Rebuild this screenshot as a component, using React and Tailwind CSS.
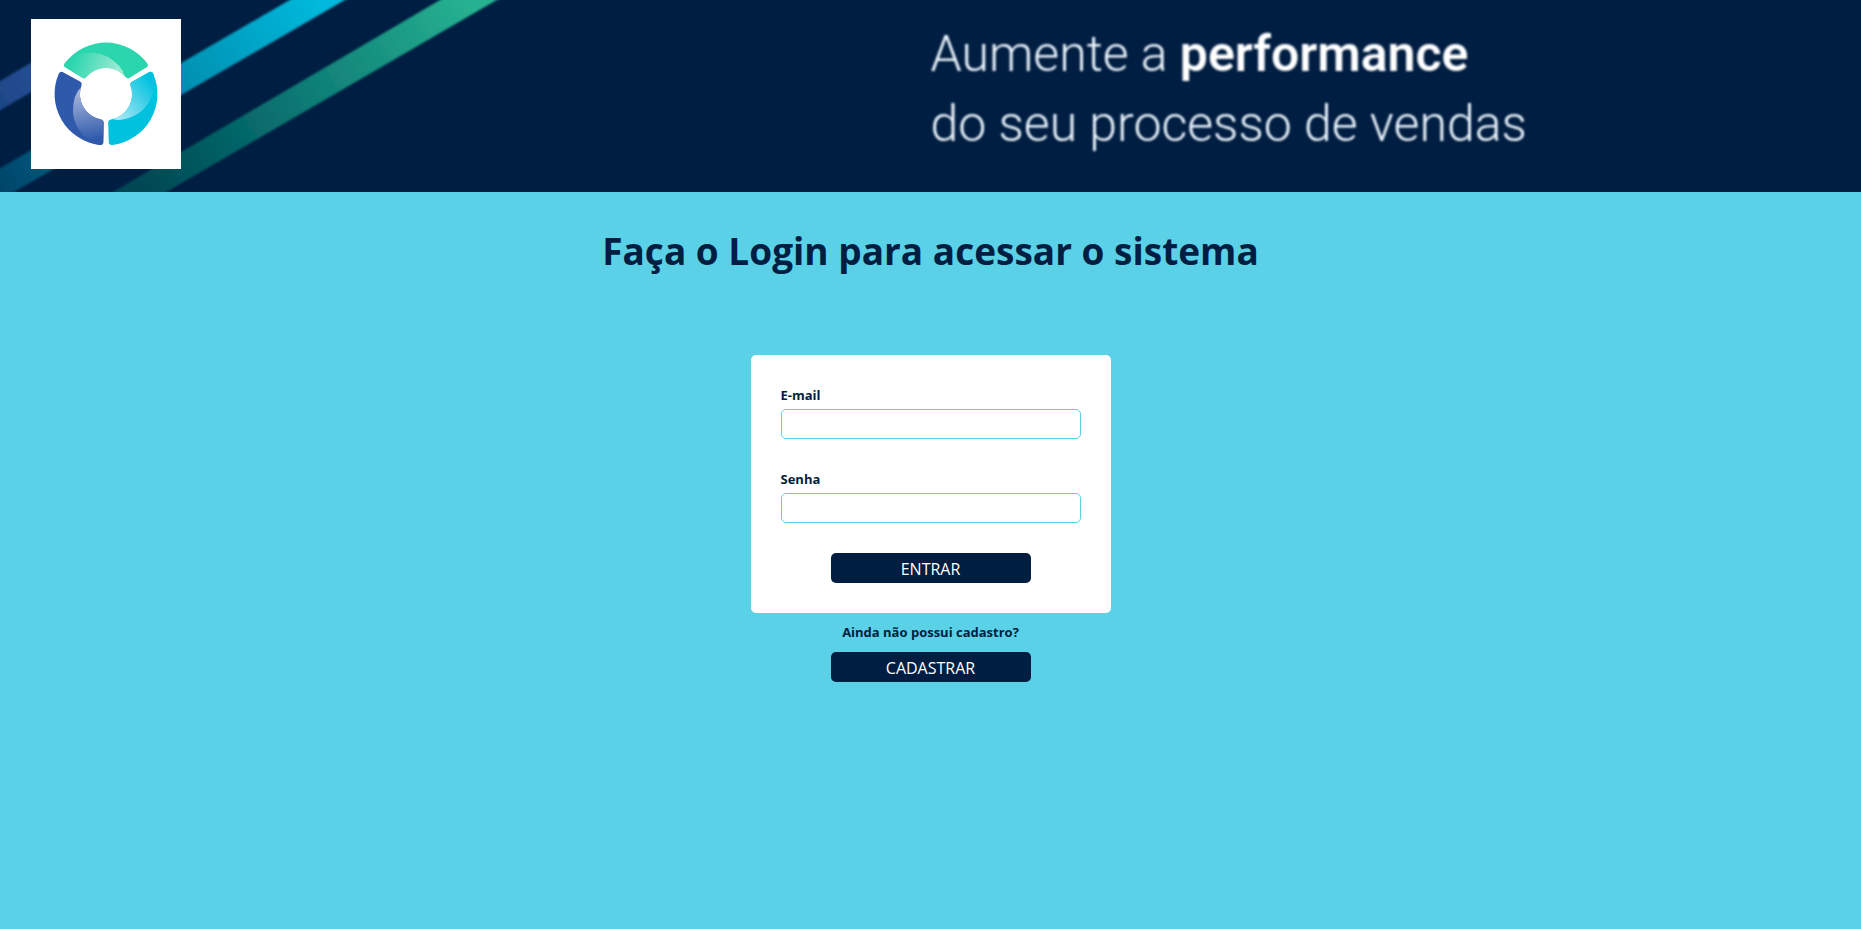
const SEGMENT =
  "M75 99 A154 154 0 0 1 321 99 Q327 108 320 112 L268 144 Q261 147 257 141 A77 77 0 0 0 139 141 Q134 147 127 143 L76 112 Q69 108 75 99 Z";
const SHINE =
  "M75 99 C105 68 160 57 204 81 Q246 106 253 137 A77 77 0 0 0 139 141 Q134 147 127 143 L76 112 Q69 108 75 99 Z";

const PARTS = [
  { id: "green", color: "#2bd6ae", light: "#a0ead5", turn: 0 },
  { id: "cyan", color: "#00c2df", light: "#a4e6f3", turn: 120 },
  { id: "blue", color: "#2f5aab", light: "#a3b2da", turn: 240 },
];

function Logo() {
  return (
    <svg viewBox="-27 -33 450 450" className="size-[150px] bg-white" role="img" aria-label="Logo">
      <defs>
        {PARTS.map((p) => (
          <linearGradient key={p.id} id={p.id} gradientUnits="userSpaceOnUse" x1="85" y1="80" x2="235" y2="135">
            <stop offset="0.1" stopColor={p.color} />
            <stop offset="1" stopColor={p.light} />
          </linearGradient>
        ))}
      </defs>
      {PARTS.map((p) => (
        <g key={p.id} transform={`rotate(${p.turn} 198 192)`}>
          <path d={SEGMENT} fill={p.color} />
          <path d={SHINE} fill={`url(#${p.id})`} />
        </g>
      ))}
    </svg>
  );
}

function Stripes() {
  return (
    <svg viewBox="0 0 520 192" className="absolute left-0 top-0 h-full w-[520px]" aria-hidden="true">
      <defs>
        <linearGradient id="stripeBlue" gradientUnits="userSpaceOnUse" x1="0" y1="96" x2="90" y2="40">
          <stop offset="0" stopColor="#1f4787" />
          <stop offset="1" stopColor="#2f5aab" />
        </linearGradient>
        <linearGradient id="stripeCyan" gradientUnits="userSpaceOnUse" x1="0" y1="185" x2="318" y2="0">
          <stop offset="0" stopColor="#004569" />
          <stop offset="0.6" stopColor="#0493b4" />
          <stop offset="1" stopColor="#00b9dc" />
        </linearGradient>
        <linearGradient id="stripeGreen" gradientUnits="userSpaceOnUse" x1="140" y1="192" x2="468" y2="0">
          <stop offset="0" stopColor="#004653" />
          <stop offset="0.4" stopColor="#08706f" />
          <stop offset="1" stopColor="#27b291" />
        </linearGradient>
        <filter id="soft" filterUnits="userSpaceOnUse" x="-20" y="-20" width="560" height="232">
          <feGaussianBlur stdDeviation="1" />
        </filter>
      </defs>
      <g filter="url(#soft)">
        <path d="M-17 91 L90 28 L90 58 L-17 120 Z" fill="url(#stripeBlue)" />
        <path d="M-17 178 L307 -10 L362 -10 L-17 210 Z" fill="url(#stripeCyan)" />
        <path d="M96 202 L457 -10 L514 -10 L149 202 Z" fill="url(#stripeGreen)" />
      </g>
    </svg>
  );
}

function Field({ id, label, type }) {
  return (
    <div className="flex flex-col gap-1">
      <label htmlFor={id} className="text-[13px] leading-5 font-bold">
        {label}
      </label>
      <input
        id={id}
        type={type}
        className="h-[30px] w-full rounded-[5px] border border-[#5ad1e7] bg-white px-2 text-sm outline-none"
      />
    </div>
  );
}

function Button({ type, children }) {
  return (
    <button
      type={type}
      className="h-[30px] w-[200px] rounded-[5px] bg-[#001e42] pt-0.5 text-base leading-6 text-white"
    >
      {children}
    </button>
  );
}

export default function App() {
  return (
    <div className="min-h-screen bg-[#5ad1e7] font-['Open_Sans','Noto_Sans',sans-serif] text-[#001e42]">
      <header className="relative grid h-48 grid-cols-2 items-start overflow-hidden bg-[#001e42] pt-[19px]">
        <Stripes />
        <div className="relative pl-[31px]">
          <Logo />
        </div>
        <p className="font-[Roboto,sans-serif] text-[50px] leading-[70px] font-light whitespace-nowrap text-[#eef7ff] blur-[1px]">
          Aumente a <strong className="font-semibold text-white">performance</strong>
          <br />
          do seu processo de vendas
        </p>
      </header>
      <main className="flex flex-col items-center pt-8">
        <h1 className="text-center text-[37px] leading-[54px] font-bold">Faça o Login para acessar o sistema</h1>
        <form className="mt-[77px] flex w-[360px] flex-col gap-[30px] rounded-[5px] bg-white p-[30px]">
          <Field id="email" label="E-mail" type="email" />
          <Field id="senha" label="Senha" type="password" />
          <div className="flex justify-center">
            <Button type="submit">ENTRAR</Button>
          </div>
        </form>
        <p className="my-[9px] text-[13px] leading-[21px] font-bold">Ainda não possui cadastro?</p>
        <Button type="button">CADASTRAR</Button>
      </main>
    </div>
  );
}
